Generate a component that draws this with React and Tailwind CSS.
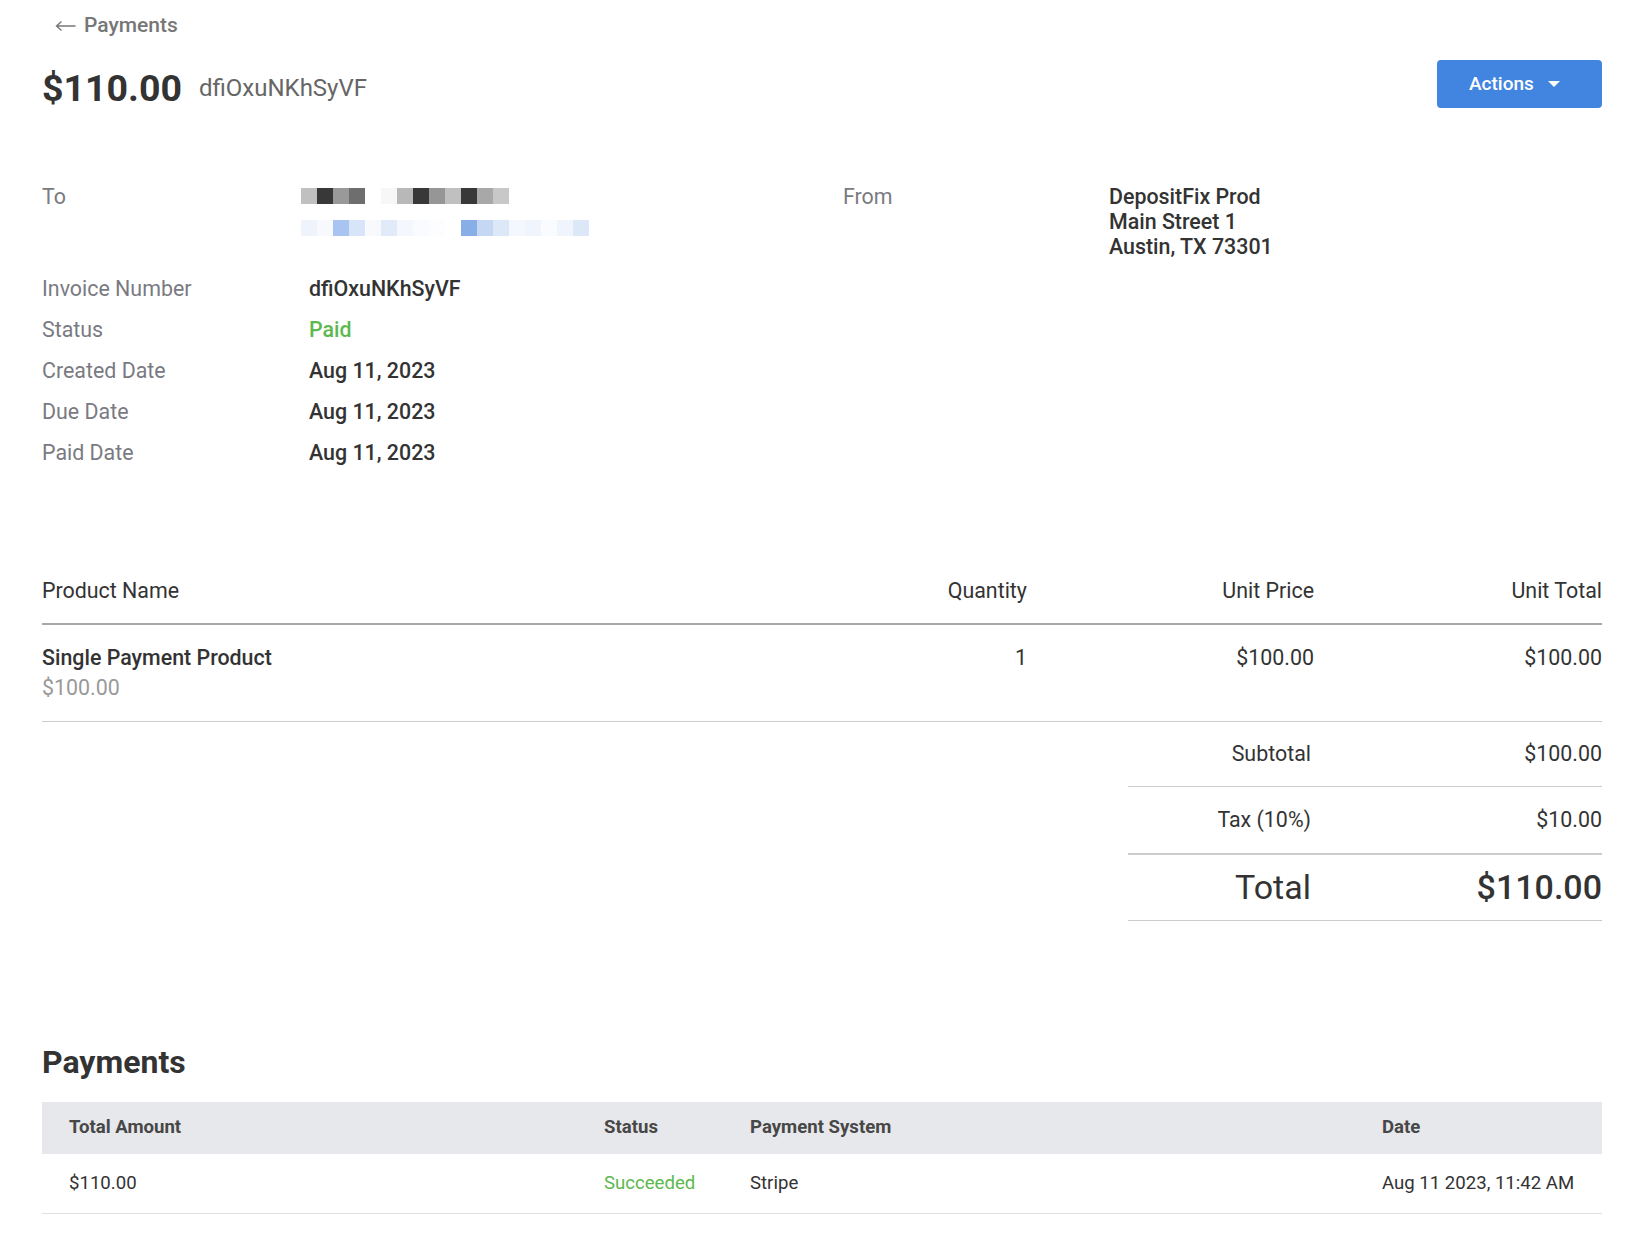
import React from 'react'

const ROW1 = ['#c0c0c0', '#383838', '#999999', '#6e6e6e', '#ffffff', '#f7f7f7', '#b8b8b8', '#383838', '#969696', '#c0c0c0', '#383838', '#a8a8a8', '#c8c8c8']
const ROW2 = ['#eef3fc', '#f7f9fd', '#a8c4f0', '#d8e4f8', '#f7f9fd', '#e0eaf9', '#f4f7fd', '#fafbfe', '#fdfdff', '#ffffff', '#88aee8', '#c6d7f4', '#dce7f8', '#f4f7fd', '#f0f4fc', '#fafbfe', '#f0f4fc', '#dce7f8']

const DETAILS = [
  { label: 'Invoice Number', value: 'dfiOxuNKhSyVF' },
  { label: 'Status', value: 'Paid', green: true },
  { label: 'Created Date', value: 'Aug 11, 2023' },
  { label: 'Due Date', value: 'Aug 11, 2023' },
  { label: 'Paid Date', value: 'Aug 11, 2023' },
]

/* blurred recipient, drawn as a pixel strip */
function Redacted({ colors }) {
  return (
    <div className="flex">
      {colors.map((c, i) => (
        <span key={i} className="block w-[16px] h-[16px]" style={{ background: c }} />
      ))}
    </div>
  )
}

export default function App() {
  return (
    <div className="bg-white min-h-[1260px] pl-[42px] pr-[32px] text-[#333] font-['Roboto',sans-serif]">
      {/* Back link */}
      <div className="pt-[10px] h-[40px] flex items-center text-[21px] leading-[30px] font-medium text-[#777]">
        <svg width="21" height="12" viewBox="0 0 21 12" className="ml-[13px] mr-[8px] mt-[2px]">
          <path d="M20.5 6H1.5M6.5 1.5L1.5 6l5 4.5" fill="none" stroke="#777" strokeWidth="1.4" />
        </svg>
        <span>Payments</span>
      </div>

      {/* Title row */}
      <div className="mt-[20px] h-[48px] flex items-center justify-between">
        <div className="mt-[8px] flex items-center gap-[17px]">
          <span className="text-[37.5px] font-bold text-[#333] leading-[48px]">$110.00</span>
          <span className="text-[24px] leading-[30px] text-[#666]">dfiOxuNKhSyVF</span>
        </div>
        <button className="w-[165px] h-[48px] rounded-[4px] bg-[#4285e0] text-white flex items-center pl-[32px] gap-[14px]">
          <span className="text-[19px] font-medium">Actions</span>
          <span className="w-0 h-0 border-l-[6px] border-r-[6px] border-t-[6px] border-l-transparent border-r-transparent border-t-white" />
        </button>
      </div>

      {/* Details */}
      <div className="mt-[76px] flex text-[21.4px]">
        <div className="w-[801px]">
          <div className="flex">
            <div className="w-[267px] leading-[26px] text-[#7a7a82]">To</div>
            <div className="ml-[-8px] pt-[4px] flex flex-col gap-[16px]">
              <Redacted colors={ROW1} />
              <Redacted colors={ROW2} />
            </div>
          </div>
          <div className="mt-[32px]">
            {DETAILS.map(d => (
              <div key={d.label} className="flex leading-[41px]">
                <div className="w-[267px] text-[#7a7a82]">{d.label}</div>
                <div className={`font-medium ${d.green ? 'text-[#5cb84f]' : 'text-[#333]'}`}>{d.value}</div>
              </div>
            ))}
          </div>
        </div>
        <div className="flex">
          <div className="w-[266px] leading-[25px] text-[#7a7a82]">From</div>
          <div className="font-medium leading-[25px] text-[#333]">
            <div>DepositFix Prod</div>
            <div>Main Street 1</div>
            <div>Austin, TX 73301</div>
          </div>
        </div>
      </div>

      {/* Line items */}
      <div className="mt-[104px] text-[21.4px]">
        <div className="grid grid-cols-[1fr_288px_287px_288px] leading-[28px] pb-[18px] border-b-2 border-[#aaaaaa]">
          <div>Product Name</div>
          <div className="text-right">Quantity</div>
          <div className="text-right">Unit Price</div>
          <div className="text-right">Unit Total</div>
        </div>
        <div className="grid grid-cols-[1fr_288px_287px_288px] leading-[30px] pt-[18px] pb-[18px] border-b border-[#cccccc]">
          <div>
            <div className="font-medium">Single Payment Product</div>
            <div className="text-[#999]">$100.00</div>
          </div>
          <div className="text-right">1</div>
          <div className="text-right">$100.00</div>
          <div className="text-right">$100.00</div>
        </div>

        {/* Totals */}
        <div className="ml-auto w-[474px]">
          <div className="h-[65px] flex items-center border-b border-[#cccccc]">
            <div className="w-[183px] text-right">Subtotal</div>
            <div className="flex-1 text-right">$100.00</div>
          </div>
          <div className="h-[68px] flex items-center border-b-2 border-[#cccccc]">
            <div className="w-[183px] text-right">Tax (10%)</div>
            <div className="flex-1 text-right">$10.00</div>
          </div>
          <div className="h-[66px] flex items-center border-b border-[#cccccc]">
            <div className="w-[183px] text-right text-[34px]">Total</div>
            <div className="flex-1 text-right text-[34px] font-medium">$110.00</div>
          </div>
        </div>
      </div>

      {/* Payments */}
      <h2 className="mt-[123px] text-[32px] leading-[36px] font-bold text-[#333]">Payments</h2>
      <div className="mt-[22px] text-[18.6px]">
        <div className="h-[52px] bg-[#e7e8ec] grid grid-cols-[534px_146px_632px_1fr] items-center font-bold text-[#474747]">
          <div className="pl-[27px]">Total Amount</div>
          <div className="pl-[28px]">Status</div>
          <div className="pl-[28px]">Payment System</div>
          <div className="pl-[28px]">Date</div>
        </div>
        <div className="h-[60px] grid grid-cols-[534px_146px_632px_1fr] items-center border-b border-[#e0e0e0] text-[#333]">
          <div className="pl-[27px]">$110.00</div>
          <div className="pl-[28px] text-[#5cb84f]">Succeeded</div>
          <div className="pl-[28px]">Stripe</div>
          <div className="pl-[28px]">Aug 11 2023, 11:42 AM</div>
        </div>
      </div>
    </div>
  )
}
